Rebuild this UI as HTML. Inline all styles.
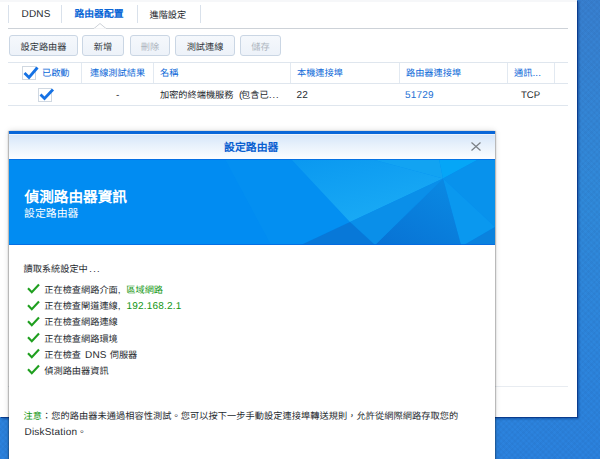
<!DOCTYPE html>
<html lang="zh-TW">
<head>
<meta charset="utf-8">
<style>
*{margin:0;padding:0;box-sizing:border-box}
html,body{width:600px;height:459px;overflow:hidden}
body{position:relative;background:#2e8ada;font-family:"Liberation Sans",sans-serif;font-size:9.2px;color:#25292e;text-rendering:geometricPrecision;}
.abs{position:absolute;white-space:nowrap}
.lat{letter-spacing:.2px;font-size:10px}
#desk{position:absolute;left:0;top:0;width:600px;height:459px;background-image:repeating-linear-gradient(45deg,rgba(0,0,40,.028) 0 2px,transparent 2px 4px),repeating-linear-gradient(-45deg,rgba(0,0,40,.028) 0 2px,transparent 2px 4px),linear-gradient(180deg,#3880d0 0,#308ada 200px,#2b82de 459px);}
#win{position:absolute;left:0;top:0;width:577px;height:417px;background:#fff;box-shadow:1px 1px 0 #0a3c8e,2px 2px 2px rgba(5,40,110,.45);}
.tabsep{position:absolute;top:5px;width:1px;height:18px;background:#d9e1eb}
.tabline{position:absolute;left:8px;top:28px;width:560px;height:1px;background:#cdd2d8}
.btn{position:absolute;top:35px;height:21px;border:1px solid #cad6e4;border-radius:3px;background:linear-gradient(#f5f8fc,#edf2f9);text-align:center;line-height:19px;padding-top:1.7px;color:#33383d}
.btn.dis{color:#aeb6bf}
.hl{position:absolute;left:8px;width:560px;height:1px;background:#dfe6ee}
.csep{position:absolute;top:63px;width:1px;height:20px;background:#e2e9f1}
.th{position:absolute;top:65px;color:#0a68d8;line-height:16px}
.td{position:absolute;top:87px;line-height:16px}
.cb{position:absolute;width:14px;height:14px;border:1px solid #d0d8e1;background:#fff}
#dlg{position:absolute;left:9px;top:131px;width:486px;height:340px;background:#fff;box-shadow: -1px 0 1px rgba(0,0,0,.22),1px 0 1px rgba(0,0,0,.22),0 0 6px rgba(0,0,0,.16)}
#dtop{position:absolute;left:0;top:0;width:486px;height:3px;background:#0866d8}
#dhead{position:absolute;left:0;top:3px;width:486px;height:25px;background:linear-gradient(#ffffff 0,#d6e6f9 1px,#e9f2fc 12px,#fcfdff 25px)}
#banner{position:absolute;left:0;top:28px;width:486px;height:86px;background:#018cf2;overflow:hidden}
.green{color:#119612}
</style>
</head>
<body>
<div id="desk"></div>
<div id="win">
  <!-- tabs -->
  <div style="position:absolute;left:0;top:0;width:577px;height:2px;background:#f6f7f9"></div>
  <div class="tabsep" style="left:8px"></div>
  <div class="abs lat" style="left:21.5px;top:7px;line-height:16px">DDNS</div>
  <div class="tabsep" style="left:61px"></div>
  <div class="abs" style="left:74.5px;top:7px;line-height:16px;color:#0a66d6;font-weight:bold;font-size:9.8px">路由器配置</div>
  <div class="tabsep" style="left:137px"></div>
  <div class="abs" style="left:149.5px;top:6.8px;line-height:16px">進階設定</div>
  <div class="tabsep" style="left:200px"></div>
  <div class="tabline"></div>
  <svg class="abs" style="left:94px;top:23px" width="12" height="7" viewBox="0 0 12 7"><path d="M0 5.5 L6 0.5 L12 5.5" fill="#fff" stroke="#cdd2d8" stroke-width="1"/><rect x="0" y="5.5" width="12" height="1.5" fill="#fff"/></svg>
  <!-- buttons -->
  <div class="btn" style="left:9px;width:69px">設定路由器</div>
  <div class="btn" style="left:82px;width:42px">新增</div>
  <div class="btn dis" style="left:130px;width:40px">刪除</div>
  <div class="btn" style="left:175px;width:60px">測試連線</div>
  <div class="btn dis" style="left:240px;width:41px">儲存</div>
  <!-- table -->
  <div class="hl" style="top:62px"></div>
  <div class="hl" style="top:83px"></div>
  <div class="hl" style="top:105px"></div>
  <div class="csep" style="left:81px"></div>
  <div class="csep" style="left:153px"></div>
  <div class="csep" style="left:290px"></div>
  <div class="csep" style="left:399px"></div>
  <div class="csep" style="left:507px"></div>
  <div class="csep" style="left:554px"></div>
  <div class="cb" style="left:22px;top:66px"></div>
  <svg class="abs" style="left:22px;top:65px" width="18" height="15" viewBox="0 0 18 15"><path d="M2.5 8 L7 12.5 L15.5 2.5" fill="none" stroke="#1672e4" stroke-width="2.8"/></svg>
  <div class="th" style="left:42px">已啟動</div>
  <div class="th" style="left:90px">連線測試結果</div>
  <div class="th" style="left:160px">名稱</div>
  <div class="th" style="left:297px">本機連接埠</div>
  <div class="th" style="left:406px">路由器連接埠</div>
  <div class="th" style="left:514px">通訊<span class="lat">...</span></div>
  <div class="cb" style="left:38px;top:88px"></div>
  <svg class="abs" style="left:38px;top:87px" width="18" height="15" viewBox="0 0 18 15"><path d="M2.5 7.5 L6.5 11.5 L15 2.5" fill="none" stroke="#1672e4" stroke-width="2.8"/></svg>
  <div class="td lat" style="left:116px;top:88px">-</div>
  <div class="td" style="left:160px">加密的終端機服務<span class="lat" style="margin-left:5.5px;margin-right:-1.5px">(</span>包含已<span style="letter-spacing:.9px;margin-left:.5px">...</span></div>
  <div class="td lat" style="left:296.5px;top:88px">22</div>
  <div class="td lat" style="left:405px;top:88px;color:#1a6fd4">51729</div>
  <div class="td lat" style="left:521px;top:88px;letter-spacing:0;font-size:9.6px">TCP</div>
  <div class="hl" style="top:386px;background:#e8ecf1"></div>
</div>

<div id="dlg">
  <div id="dtop"></div>
  <div id="dhead"></div>
  <div class="abs" style="left:215px;top:8.5px;line-height:16px;font-weight:bold;color:#0a5fd0;font-size:10.9px">設定路由器</div>
  <svg class="abs" style="left:462px;top:11px" width="10" height="9" viewBox="0 0 10 9"><path d="M0.5 0.5 L9.5 8.5 M9.5 0.5 L0.5 8.5" stroke="#7a7f85" stroke-width="1.2"/></svg>
  <div id="banner">
    <svg width="486" height="86" viewBox="0 0 486 86" style="position:absolute;left:0;top:0">
      <defs>
        <linearGradient id="g3" x1="0" y1="0" x2="0.6" y2="1"><stop offset="0" stop-color="#0a98f0"/><stop offset="1" stop-color="#1aabf5"/></linearGradient>
        <linearGradient id="g9" x1="0" y1="1" x2="0.7" y2="0"><stop offset="0" stop-color="#0872d4"/><stop offset="1" stop-color="#0a88e2"/></linearGradient>
      </defs>
      <rect width="486" height="86" fill="#018cf2"/>
      <polygon points="216,0 282,0 341,63 292,86 262,86" fill="#038ff1"/>
      <polygon points="282,0 362,0 434,19.5 341,63" fill="url(#g3)"/>
      <polygon points="362,0 430,0 434,19.5" fill="#12a3f2"/>
      <polygon points="430,0 470,0 434,19.5" fill="#05a6f7"/>
      <polygon points="470,0 486,0 486,68 434,19.5" fill="#0892ec"/>
      <polygon points="434,19.5 486,68 455,86 452,86" fill="#0a98ef"/>
      <polygon points="455,86 486,68 486,86" fill="#0a82de"/>
      <polygon points="434,19.5 452,86 366,86" fill="url(#g9)"/>
      <polygon points="341,63 434,19.5 366,86" fill="#0a8fe9"/>
      <polygon points="341,63 366,86 292,86" fill="#0878d8"/>
      <rect width="486" height="1" fill="#0568e0" opacity=".8"/>
      <rect y="85" width="486" height="1" fill="#0568e0" opacity=".8"/>
    </svg>
  </div>
  <div class="abs" style="left:15.5px;top:57.5px;line-height:18px;font-size:14.65px;font-weight:bold;color:#fff">偵測路由器資訊</div>
  <div class="abs" style="left:15px;top:76.5px;line-height:13px;font-size:10.9px;color:#fff">設定路由器</div>

  <div class="abs" style="left:14.5px;top:129.5px;line-height:16px">讀取系統設定中<span style="letter-spacing:1.3px;margin-left:1.5px">...</span></div>
  <div id="rows">
  <svg class="abs" style="left:18px;top:152.0px" width="13" height="11" viewBox="0 0 13 11"><path d="M1 5.2 L4.8 9.2 L12 1.5" fill="none" stroke="#1f9f1f" stroke-width="2.1"/></svg>
  <div class="abs" style="left:35.3px;top:150.5px;line-height:16px">正在檢查網路介面<span class="lat">, </span><span class="green" style="margin-left:2.5px">區域網路</span></div>
  <svg class="abs" style="left:18px;top:168.5px" width="13" height="11" viewBox="0 0 13 11"><path d="M1 5.2 L4.8 9.2 L12 1.5" fill="none" stroke="#1f9f1f" stroke-width="2.1"/></svg>
  <div class="abs" style="left:35.3px;top:167.0px;line-height:16px">正在檢查閘道連線<span class="lat">, </span><span class="green lat" style="margin-left:2.8px">192.168.2.1</span></div>
  <svg class="abs" style="left:18px;top:184.5px" width="13" height="11" viewBox="0 0 13 11"><path d="M1 5.2 L4.8 9.2 L12 1.5" fill="none" stroke="#1f9f1f" stroke-width="2.1"/></svg>
  <div class="abs" style="left:35.3px;top:183.0px;line-height:16px">正在檢查網路連線</div>
  <svg class="abs" style="left:18px;top:201.0px" width="13" height="11" viewBox="0 0 13 11"><path d="M1 5.2 L4.8 9.2 L12 1.5" fill="none" stroke="#1f9f1f" stroke-width="2.1"/></svg>
  <div class="abs" style="left:35.3px;top:199.5px;line-height:16px">正在檢查網路環境</div>
  <svg class="abs" style="left:18px;top:217.0px" width="13" height="11" viewBox="0 0 13 11"><path d="M1 5.2 L4.8 9.2 L12 1.5" fill="none" stroke="#1f9f1f" stroke-width="2.1"/></svg>
  <div class="abs" style="left:35.3px;top:215.5px;line-height:16px">正在檢查<span class="lat" style="margin-left:1px"> DNS </span>伺服器</div>
  <svg class="abs" style="left:18px;top:233.0px" width="13" height="11" viewBox="0 0 13 11"><path d="M1 5.2 L4.8 9.2 L12 1.5" fill="none" stroke="#1f9f1f" stroke-width="2.1"/></svg>
  <div class="abs" style="left:35.3px;top:231.5px;line-height:16px">偵測路由器資訊</div>
  <div class="abs" style="left:14.5px;top:277px;line-height:16px;letter-spacing:.065px"><span class="green">注意</span>：您的路由器未通過相容性測試。您可以按下一步手動設定連接埠轉送規則，允許從網際網路存取您的</div>
  <div class="abs" style="left:15.5px;top:293px;line-height:16px"><span class="lat">DiskStation</span>。</div>
</div>
</div>
</body>
</html>
